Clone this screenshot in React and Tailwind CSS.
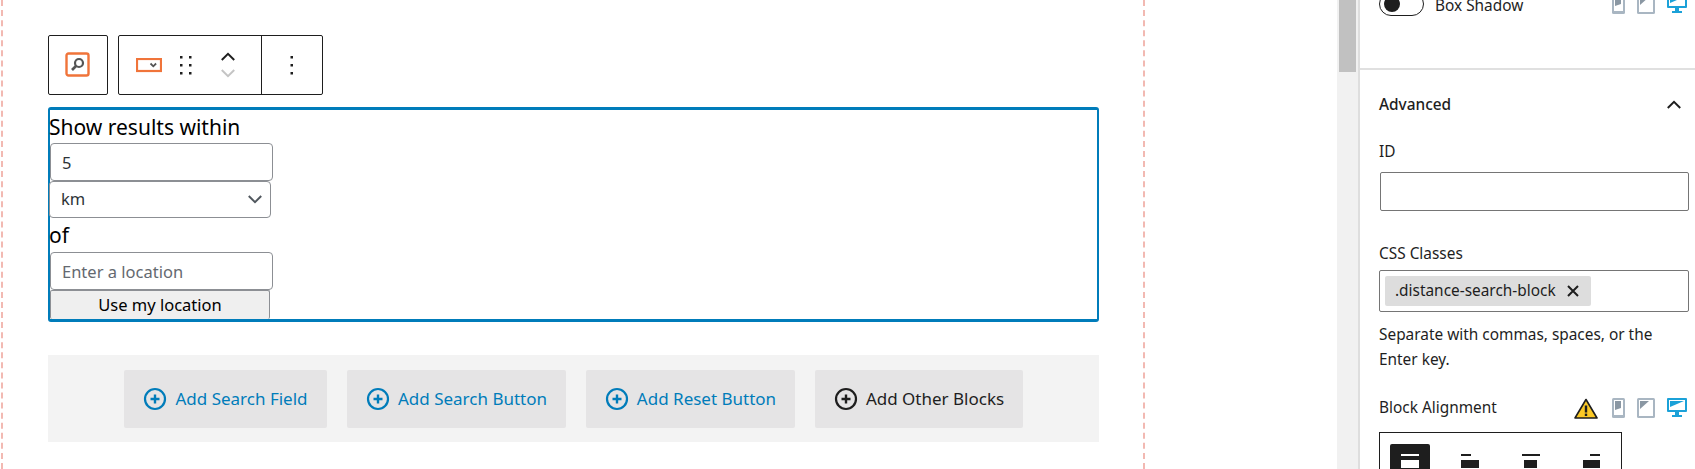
const FONT = 'font-["Noto_Sans",sans-serif]';

const ADD_BUTTONS = [
  { label: 'Add Search Field', width: 'w-[203px]', color: 'text-[#007cba]' },
  { label: 'Add Search Button', width: 'w-[219px]', color: 'text-[#007cba]' },
  { label: 'Add Reset Button', width: 'w-[209px]', color: 'text-[#007cba]' },
  { label: 'Add Other Blocks', width: 'w-[208px]', color: 'text-[#1e1e1e]' },
];

function PlusCircle() {
  return (
    <svg width="24" height="24" viewBox="0 0 24 24" fill="none" stroke="currentColor" className="shrink-0">
      <circle cx="12" cy="12" r="10" strokeWidth="2.2" />
      <path d="M12 7.5v9M7.5 12h9" strokeWidth="2.4" />
    </svg>
  );
}

function Chevron({ up, className }) {
  return (
    <svg width="16" height="9" viewBox="0 0 18 10" fill="none" stroke="currentColor" strokeWidth="2.2" className={className}>
      <path d={up ? 'M2 9l7-7 7 7' : 'M2 1l7 7 7-7'} />
    </svg>
  );
}

function SearchBlockIcon() {
  return (
    <svg width="26" height="26" viewBox="0 0 26 26" fill="none">
      <rect x="1.5" y="1.5" width="22" height="22" rx="2" stroke="#f0743a" strokeWidth="2.4" />
      <circle cx="14" cy="11" r="4" stroke="#555" strokeWidth="2.2" />
      <path d="M11 14l-4 4" stroke="#555" strokeWidth="2.6" />
    </svg>
  );
}

function SelectBlockIcon() {
  return (
    <svg width="26" height="15" viewBox="0 0 26 15" fill="none">
      <rect x="1" y="1" width="24" height="12" stroke="#f0743a" strokeWidth="2.2" />
      <path d="M14.5 5.5l2.8 2.8 2.8-2.8" stroke="#555" strokeWidth="1.8" />
    </svg>
  );
}

function DragIcon() {
  return (
    <svg width="14" height="20" viewBox="0 0 14 20" fill="#1e1e1e">
      <rect x="1" y="1" width="2.5" height="2.5" />
      <rect x="10" y="1" width="2.5" height="2.5" />
      <rect x="1" y="9" width="2.5" height="2.5" />
      <rect x="10" y="9" width="2.5" height="2.5" />
      <rect x="1" y="17" width="2.5" height="2.5" />
      <rect x="10" y="17" width="2.5" height="2.5" />
    </svg>
  );
}

function MoreIcon() {
  return (
    <svg width="4" height="20" viewBox="0 0 4 20" fill="#1e1e1e">
      <rect x="0.5" y="1" width="2.5" height="2.5" />
      <rect x="0.5" y="9" width="2.5" height="2.5" />
      <rect x="0.5" y="17" width="2.5" height="2.5" />
    </svg>
  );
}

function DeviceIcons() {
  return (
    <div className="flex items-center">
      <svg width="13" height="20" viewBox="0 0 13 20" className="mr-[12px]">
        <rect x="0" y="0" width="13" height="20" rx="1.5" fill="#a9b6c2" />
        <rect x="2" y="2" width="9" height="15" fill="#fff" />
        <path d="M3 3h6v7l-6 2z" fill="#8a97a3" />
      </svg>
      <svg width="18" height="20" viewBox="0 0 18 20" className="mr-[12px]">
        <rect x="0" y="0" width="18" height="20" rx="1.5" fill="#a9b6c2" />
        <rect x="2" y="2" width="14" height="16" fill="#fff" />
        <path d="M3 3h9l-9 8z" fill="#8a97a3" />
      </svg>
      <svg width="20" height="20" viewBox="0 0 20 20">
        <rect x="0" y="0" width="20" height="14" rx="1" fill="#1ba1d8" />
        <rect x="2" y="2" width="16" height="10" fill="#fff" />
        <path d="M3 3h14l-14 6z" fill="#1ba1d8" />
        <path d="M8 14h4v3h3v2H5v-2h3z" fill="#1ba1d8" />
      </svg>
    </div>
  );
}

function WarningIcon() {
  return (
    <svg width="24" height="21" viewBox="0 0 24 21">
      <path d="M12 1.5L23 20H1z" fill="#fbc926" stroke="#1e1e1e" strokeWidth="1.6" strokeLinejoin="round" />
      <path d="M12 7.5v7" stroke="#1e1e1e" strokeWidth="2.4" />
      <rect x="10.8" y="15.6" width="2.4" height="2.4" fill="#1e1e1e" />
    </svg>
  );
}

function AlignIcon({ bar, box, active }) {
  const color = active ? '#fff' : '#1e1e1e';
  return (
    <svg width="20" height="20" viewBox="0 0 20 20">
      <rect x={bar[0]} y="0" width={bar[1]} height="2" fill={color} />
      <rect x={box[0]} y="6" width={box[1]} height="8" fill={color} />
    </svg>
  );
}

const inputClass = 'block h-[38px] w-[223px] rounded-[4px] border border-[#8c8f94] bg-white px-[11px] pt-px text-[16.5px] text-[#2c3338] outline-none placeholder:text-[#646970]';

function Canvas() {
  return (
    <div className="ml-px h-[469px] w-[1144px] border-x-2 border-dashed border-[#f2b9b2] pl-[45px]">
      <div className="flex gap-[10px] pt-[35px]">
        <div className="flex h-[60px] w-[60px] items-center justify-center rounded-[2px] border border-[#1e1e1e]">
          <SearchBlockIcon />
        </div>
        <div className="flex h-[60px] w-[205px] rounded-[2px] border border-[#1e1e1e]">
          <div className="flex w-[143px] items-center border-r border-[#1e1e1e] pl-[17px]">
            <SelectBlockIcon />
            <div className="ml-[17px]"><DragIcon /></div>
            <div className="ml-[27px] flex flex-col gap-[8px]">
              <Chevron up className="text-[#1e1e1e]" />
              <Chevron className="text-[#c4c4c4]" />
            </div>
          </div>
          <div className="flex flex-1 items-center justify-center"><MoreIcon /></div>
        </div>
      </div>

      <div className="mt-[12px] h-[215px] w-[1051px] rounded-[3px] border-x-2 border-y-[3px] border-[#007cba] text-[21px] text-black">
        <div className="-ml-px h-[33px] leading-[34px]">Show results within</div>
        <input className={inputClass} defaultValue="5" />
        <div className="relative -ml-px w-[222px]">
          <select className="block h-[37px] w-full appearance-none rounded-[4px] border border-[#8c8f94] bg-white px-[11px] text-[16.5px] text-[#2c3338] outline-none">
            <option>km</option>
          </select>
          <Chevron className="pointer-events-none absolute right-[8px] top-[14px] text-[#50575e]" />
        </div>
        <div className="-ml-px h-[34px] leading-[35px]">of</div>
        <input className={inputClass} placeholder="Enter a location" />
        <button className="block h-[29px] w-[220px] rounded-[2px] border border-[#8c8f94] border-b-0 bg-[#efefef] pt-px text-center text-[16.5px] text-black">
          Use my location
        </button>
      </div>

      <div className="mt-[33px] flex h-[87px] w-[1051px] items-center justify-center gap-[20px] bg-[#f3f3f3] pt-px">
        {ADD_BUTTONS.map((b) => (
          <button key={b.label} className={`flex h-[58px] items-center justify-center gap-[8px] rounded-[2px] bg-[#e5e4e5] text-[17px] ${b.width} ${b.color}`}>
            <PlusCircle />
            {b.label}
          </button>
        ))}
      </div>
    </div>
  );
}

function Sidebar() {
  return (
    <div className="h-[469px] w-[337px] overflow-hidden border-l-2 border-[#dedede] text-[15.4px] text-[#1e1e1e]">
      <div className="h-[70px] border-b-2 border-[#e0e0e0] pl-[19px] pr-[8px] pt-px">
        <div className="-mt-[9px] flex h-[24px] items-center">
          <div className="flex h-[24px] w-[45px] items-center rounded-full border border-[#1e1e1e] pl-[4px]">
            <div className="h-[16px] w-[16px] rounded-full bg-[#1e1e1e]" />
          </div>
          <span className="ml-[11px] pt-[3px]">Box Shadow</span>
          <div className="ml-auto"><DeviceIcons /></div>
        </div>
      </div>

      <div className="pl-[19px] pr-[6px]">
        <div className="mt-[22px] flex h-[24px] items-center justify-between pr-[7px] pt-[1px] font-medium">
          Advanced
          <Chevron up className="text-[#1e1e1e]" />
        </div>
        <div className="mt-[26px] h-[20px] leading-[20px]">ID</div>
        <input className="ml-px mt-[10px] block h-[39px] w-[309px] rounded-[2px] border border-[#757575] bg-white outline-none" />
        <div className="mt-[33px] h-[20px] leading-[20px]">CSS Classes</div>
        <div className="mt-[6px] flex h-[42px] w-[310px] items-center rounded-[2px] border border-[#757575] pl-[5px]">
          <div className="flex h-[30px] w-[206px] items-center gap-[10px] rounded-[2px] bg-[#dddddd] pl-[10px]">
            .distance-search-block
            <svg width="14" height="14" viewBox="0 0 14 14" fill="none" stroke="#1e1e1e" strokeWidth="2">
              <path d="M2 2l10 10M12 2L2 12" />
            </svg>
          </div>
        </div>
        <p className="mt-[10px] w-[300px] leading-[25px]">Separate with commas, spaces, or the Enter key.</p>
        <div className="mt-[24px] flex h-[24px] items-center">
          Block Alignment
          <div className="ml-auto flex items-center gap-[14px] pr-[2px]">
            <WarningIcon />
            <DeviceIcons />
          </div>
        </div>
        <div className="mt-[12px] flex h-[60px] w-[243px] items-start border border-[#1e1e1e] pl-[10px] pt-[11px]">
          <div className="flex h-[40px] w-[40px] items-center justify-center rounded-[2px] bg-[#1e1e1e]"><AlignIcon active bar={[1, 18]} box={[1, 18]} /></div>
          <div className="ml-[21px] flex h-[40px] w-[40px] items-center justify-center"><AlignIcon bar={[0, 10]} box={[0, 18]} /></div>
          <div className="ml-[21px] flex h-[40px] w-[40px] items-center justify-center"><AlignIcon bar={[0, 18]} box={[2, 13]} /></div>
          <div className="ml-[21px] flex h-[40px] w-[40px] items-center justify-center"><AlignIcon bar={[7, 10]} box={[0, 17]} /></div>
        </div>
      </div>
    </div>
  );
}

export default function App() {
  return (
    <div className={`flex h-[469px] w-[1695px] overflow-hidden bg-white ${FONT}`}>
      <div className="w-[1337px] shrink-0"><Canvas /></div>
      <div className="h-[469px] w-[21px] shrink-0 bg-[#f1f1f1] pl-[2px] pr-[2px]">
        <div className="h-[72px] w-[17px] bg-[#c1c1c1]" />
      </div>
      <Sidebar />
    </div>
  );
}
